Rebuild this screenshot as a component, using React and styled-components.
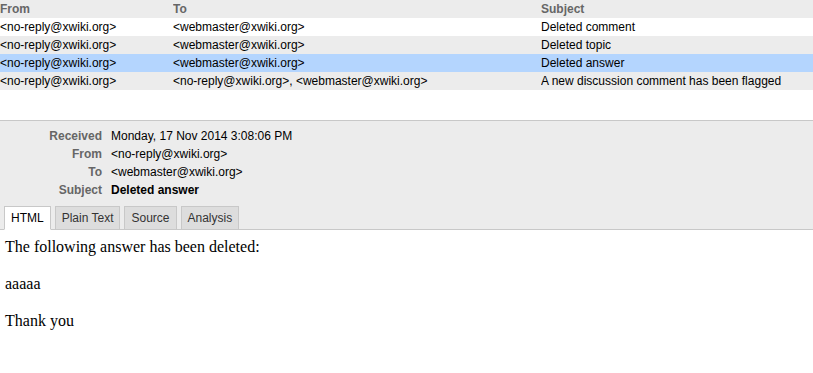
import React, { useState } from 'react';
import styled, { createGlobalStyle } from 'styled-components';

const GlobalStyle = createGlobalStyle`
  html, body {
    margin: 0;
    padding: 0;
    background: #fff;
  }
  body {
    font-family: "Liberation Sans", Arial, sans-serif;
    font-size: 12px;
    color: #000;
  }
`;

const messages = [
  { from: '<no-reply@xwiki.org>', to: '<webmaster@xwiki.org>', subject: 'Deleted comment' },
  { from: '<no-reply@xwiki.org>', to: '<webmaster@xwiki.org>', subject: 'Deleted topic' },
  { from: '<no-reply@xwiki.org>', to: '<webmaster@xwiki.org>', subject: 'Deleted answer' },
  {
    from: '<no-reply@xwiki.org>',
    to: '<no-reply@xwiki.org>, <webmaster@xwiki.org>',
    subject: 'A new discussion comment has been flagged',
  },
];

const tabs = ['HTML', 'Plain Text', 'Source', 'Analysis'];

const Page = styled.div`
  display: flex;
  flex-direction: column;
`;

const List = styled.div`
  height: 120px;
`;

const Row = styled.div`
  display: grid;
  grid-template-columns: 173px 368px 1fr;
  height: 18px;
  line-height: 18px;
  white-space: nowrap;
  background: ${({ $bg }) => $bg};
  color: ${({ $head }) => ($head ? '#666' : '#000')};
  font-weight: ${({ $head }) => ($head ? 'bold' : 'normal')};
  cursor: default;
`;

const Cell = styled.div`
  overflow: hidden;
`;

const Details = styled.div`
  background: #ececec;
  border-top: 1px solid #c8c8c8;
  border-bottom: 1px solid #c8c8c8;
  padding-top: 6px;
`;

const Headers = styled.div`
  display: grid;
  grid-template-columns: 102px 1fr;
  column-gap: 9px;
  line-height: 18px;
`;

const Label = styled.div`
  text-align: right;
  font-weight: bold;
  color: #666;
`;

const Value = styled.div`
  font-weight: ${({ $bold }) => ($bold ? 'bold' : 'normal')};
`;

const TabBar = styled.div`
  display: flex;
  gap: 4px;
  padding: 7px 4px 0;
  margin-bottom: -1px;
`;

const Tab = styled.div`
  height: 22px;
  line-height: 23px;
  padding: 0 6px;
  border: 1px solid #c8c8c8;
  border-bottom-color: ${({ $active }) => ($active ? '#fff' : '#c8c8c8')};
  background: ${({ $active }) => ($active ? '#fff' : '#ddd')};
  color: ${({ $active }) => ($active ? '#000' : '#333')};
  cursor: pointer;
`;

const Body = styled.div`
  font-family: "Liberation Serif", "Times New Roman", serif;
  font-size: 16px;
  line-height: 21px;
  padding: 0 5px;
  p {
    margin: 16px 0;
  }
  p:first-child {
    margin-top: 6px;
  }
`;

const rowBg = (i, selected) => {
  if (i === selected) return '#b4d5fe';
  return i % 2 === 0 ? '#fff' : '#ececec';
};

const App = () => {
  const [selected, setSelected] = useState(2);
  const [tab, setTab] = useState('HTML');
  const msg = messages[selected];

  return (
    <Page>
      <GlobalStyle />
      <List>
        <Row $head $bg="#ececec">
          <Cell>From</Cell>
          <Cell>To</Cell>
          <Cell>Subject</Cell>
        </Row>
        {messages.map((m, i) => (
          <Row key={i} $bg={rowBg(i, selected)} onClick={() => setSelected(i)}>
            <Cell>{m.from}</Cell>
            <Cell>{m.to}</Cell>
            <Cell>{m.subject}</Cell>
          </Row>
        ))}
      </List>
      <Details>
        <Headers>
          <Label>Received</Label>
          <Value>Monday, 17 Nov 2014 3:08:06 PM</Value>
          <Label>From</Label>
          <Value>{msg.from}</Value>
          <Label>To</Label>
          <Value>{msg.to}</Value>
          <Label>Subject</Label>
          <Value $bold>{msg.subject}</Value>
        </Headers>
        <TabBar>
          {tabs.map((t) => (
            <Tab key={t} $active={t === tab} onClick={() => setTab(t)}>
              {t}
            </Tab>
          ))}
        </TabBar>
      </Details>
      <Body>
        <p>The following answer has been deleted:</p>
        <p>aaaaa</p>
        <p>Thank you</p>
      </Body>
    </Page>
  );
};

export default App;
